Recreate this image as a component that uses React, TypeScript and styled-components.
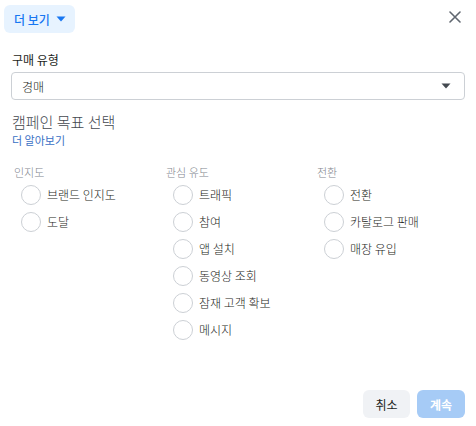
import styled, { createGlobalStyle } from "styled-components";

const GlobalStyle = createGlobalStyle`
  html, body {
    margin: 0;
    padding: 0;
    background: #ffffff;
  }
  body {
    font-family: "Noto Sans CJK KR", "Noto Sans", sans-serif;
    color: #1c1e21;
  }
  * {
    box-sizing: border-box;
  }
`;

interface Group {
  title: string;
  options: string[];
}

const groups: Group[] = [
  { title: "인지도", options: ["브랜드 인지도", "도달"] },
  {
    title: "관심 유도",
    options: ["트래픽", "참여", "앱 설치", "동영상 조회", "잠재 고객 확보", "메시지"],
  },
  { title: "전환", options: ["전환", "카탈로그 판매", "매장 유입"] },
];

const Caret = ({ color }: { color: string }) => (
  <svg width="10" height="6" viewBox="0 0 10 6">
    <path d="M0.5 0.5 L9.5 0.5 L5 5.5 Z" fill={color} />
  </svg>
);

const App = () => {
  return (
    <>
      <GlobalStyle />
      <Dialog>
        <Header>
          <MoreButton>
            더 보기
            <Caret color="#1877f2" />
          </MoreButton>
          <CloseButton aria-label="close">
            <svg width="12" height="12" viewBox="0 0 12 12">
              <path
                d="M1 1 L11 11 M11 1 L1 11"
                stroke="#606770"
                strokeWidth="1.6"
                strokeLinecap="round"
              />
            </svg>
          </CloseButton>
        </Header>

        <Body>
          <FieldLabel>구매 유형</FieldLabel>
          <Select>
            <span>경매</span>
            <Caret color="#444950" />
          </Select>

          <Title>캠페인 목표 선택</Title>
          <LearnMore>더 알아보기</LearnMore>

          <Columns>
            {groups.map((g) => (
              <Column key={g.title}>
                <GroupTitle>{g.title}</GroupTitle>
                {g.options.map((o) => (
                  <Option key={o}>
                    <Radio />
                    <OptionText>{o}</OptionText>
                  </Option>
                ))}
              </Column>
            ))}
          </Columns>
        </Body>

        <Footer>
          <CancelButton>취소</CancelButton>
          <ContinueButton disabled>계속</ContinueButton>
        </Footer>
      </Dialog>
    </>
  );
};

export default App;

const Dialog = styled.div`
  width: 476px;
  height: 426px;
  display: flex;
  flex-direction: column;
`;

const Header = styled.div`
  display: flex;
  align-items: center;
  justify-content: space-between;
  padding: 5px 14px 0 4px;
`;

const MoreButton = styled.button`
  height: 28px;
  width: 71px;
  padding: 0 0 0 10px;
  border: none;
  border-radius: 6px;
  background: #e7f3ff;
  color: #1877f2;
  font-family: inherit;
  font-size: 12px;
  font-weight: 500;
  display: flex;
  align-items: center;
  gap: 6px;
  cursor: pointer;
`;

const CloseButton = styled.button`
  width: 14px;
  height: 14px;
  padding: 0;
  border: none;
  background: none;
  display: flex;
  align-items: center;
  justify-content: center;
  margin-top: -4px;
`;

const Body = styled.div`
  padding: 0 11px 0 11px;
  display: flex;
  flex-direction: column;
`;

const FieldLabel = styled.div`
  margin-top: 19px;
  padding-left: 1px;
  font-size: 12px;
  line-height: 16px;
  color: #1c1e21;
`;

const Select = styled.div`
  margin-top: 4px;
  height: 28px;
  border: 1px solid #ccd0d5;
  border-radius: 4px;
  padding: 0 13px 0 10px;
  display: flex;
  align-items: center;
  justify-content: space-between;
  font-size: 12px;
  font-weight: 300;
  color: #1c1e21;
`;

const Title = styled.div`
  margin-top: 12px;
  padding-left: 1px;
  font-size: 15px;
  font-weight: 300;
  line-height: 19px;
  color: #444950;
`;

const LearnMore = styled.a`
  margin-top: 1px;
  padding-left: 1px;
  font-size: 11px;
  line-height: 16px;
  color: #3a70c4;
  cursor: pointer;
`;

const Columns = styled.div`
  margin-top: 17px;
  padding-left: 3px;
  display: grid;
  grid-template-columns: 152px 151px 1fr;
`;

const Column = styled.div`
  display: flex;
  flex-direction: column;
`;

const GroupTitle = styled.div`
  font-size: 11px;
  font-weight: 300;
  line-height: 14px;
  color: #7f858e;
  margin-bottom: 2px;
`;

const Option = styled.label`
  height: 27px;
  display: flex;
  align-items: center;
  gap: 6px;
  padding-left: 7px;
  cursor: pointer;
`;

const Radio = styled.span`
  width: 20px;
  height: 20px;
  border-radius: 50%;
  border: 1px solid #ccd0d5;
  background: #ffffff;
  flex-shrink: 0;
`;

const OptionText = styled.span`
  font-size: 12px;
  font-weight: 300;
  color: #1c1e21;
`;

const Footer = styled.div`
  margin-top: auto;
  padding: 0 11px 8px 0;
  display: flex;
  justify-content: flex-end;
  gap: 7px;
`;

const FooterButton = styled.button`
  height: 28px;
  border: none;
  border-radius: 6px;
  font-family: inherit;
  font-size: 12px;
  padding: 0;
`;

const CancelButton = styled(FooterButton)`
  width: 47px;
  background: #f0f2f5;
  color: #1c1e21;
`;

const ContinueButton = styled(FooterButton)`
  width: 48px;
  background: #a6cbf6;
  color: #ffffff;
  font-weight: 700;
`;
